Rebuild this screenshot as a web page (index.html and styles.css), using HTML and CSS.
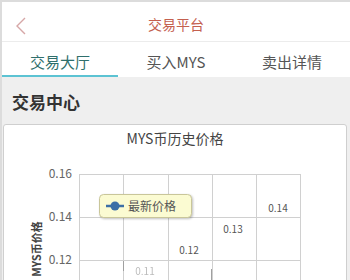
FILE: index.html
```html
<!DOCTYPE html>
<html lang="zh-CN">
<head>
    <meta charset="UTF-8">
    <meta name="viewport" content="width=device-width, initial-scale=1.0">
    <title>交易平台</title>
    <link rel="stylesheet" href="styles.css">
</head>
<body>
    <!-- Barra superiore -->
    <header class="topbar">
        <span class="back">
            <svg width="12" height="18" viewBox="0 0 12 18"><path d="M10 1 L2 9 L10 17" fill="none" stroke="#d6a7a7" stroke-width="1.4"/></svg>
        </span>
        <span class="title">交易平台</span>
    </header>

    <!-- Tab -->
    <nav class="tabs">
        <div class="tab active">交易大厅</div>
        <div class="tab">买入MYS</div>
        <div class="tab">卖出详情</div>
    </nav>

    <h2 class="section">交易中心</h2>

    <!-- Grafico prezzi -->
    <div class="card">
        <div class="card-title">MYS币历史价格</div>
        <svg class="chart" width="342" height="140" viewBox="4 150 342 140">
            <g stroke="#d0d0d0" stroke-width="1">
                <line x1="79" y1="173.5" x2="301" y2="173.5"/>
                <line x1="79" y1="216.5" x2="301" y2="216.5"/>
                <line x1="79" y1="259.5" x2="301" y2="259.5"/>
                <line x1="79.5" y1="173" x2="79.5" y2="290"/>
                <line x1="123.5" y1="173" x2="123.5" y2="290"/>
                <line x1="168.5" y1="173" x2="168.5" y2="290"/>
                <line x1="212.5" y1="173" x2="212.5" y2="290"/>
                <line x1="256.5" y1="173" x2="256.5" y2="290"/>
                <line x1="300.5" y1="173" x2="300.5" y2="290"/>
            </g>
            <g stroke="#a0a0a0" stroke-width="1">
                <line x1="123.5" y1="260" x2="123.5" y2="270"/>
                <line x1="211.5" y1="268" x2="211.5" y2="280"/>
            </g>
            <g class="ylabels">
                <text x="72" y="176.5">0.16</text>
                <text x="72" y="219.5">0.14</text>
                <text x="72" y="262.5">0.12</text>
            </g>
            <text class="ytitle" transform="translate(41 248) rotate(-90)">MYS币价格</text>
            <g class="vlabels">
                <text x="278" y="211">0.14</text>
                <text x="233" y="232">0.13</text>
                <text x="189" y="253">0.12</text>
                <text x="145" y="274" class="fade">0.11</text>
            </g>
            <!-- Legenda -->
            <rect x="99.5" y="193.5" width="92" height="23" rx="4" fill="#fbfbd2" stroke="#c9c69a" class="legend-box"/>
            <line x1="106" y1="205" x2="124" y2="205" stroke="#3c6fa6" stroke-width="2.5"/>
            <circle cx="115" cy="205" r="4.5" fill="#3c6fa6"/>
            <text class="legend-text" x="128" y="209.5">最新价格</text>
        </svg>
    </div>
</body>
</html>
```

FILE: styles.css
```css
body {
    margin: 0;
    width: 348px;
    height: 278px;
    overflow: hidden;
    border-top: 2px solid #dcdcdc;
    border-left: 2px solid #dcdcdc;
    background: #efefef;
    font-family: "Noto Sans CJK SC", "Noto Sans", sans-serif;
}
.topbar {
    position: relative;
    height: 40px;
    box-sizing: border-box;
    padding-top: 4px;
    display: flex;
    align-items: center;
    justify-content: center;
    background: #fff;
    border-bottom: 1px solid #ececec;
}
.back {
    position: absolute;
    left: 13px;
    top: 14px;
}
.title {
    font-size: 14px;
    color: #c4604f;
}
.tabs {
    display: flex;
    height: 35px;
    background: #fff;
}
.tab {
    flex: 1;
    box-sizing: border-box;
    padding-top: 4px;
    text-align: center;
    font-size: 15px;
    line-height: 31px;
    color: #555;
    border-bottom: 2px solid transparent;
}
.tab.active {
    color: #2f6f6c;
    border-bottom-color: #5cc3d3;
}
.section {
    margin: 0 0 11px;
    padding: 14px 0 0 10px;
    font-size: 17px;
    line-height: 22px;
    font-weight: bold;
    color: #333;
}
.card {
    margin: 0 3px 0 1px;
    background: #fff;
    border: 1px solid #cfcfcf;
    border-radius: 3px;
}
.card-title {
    padding-top: 2px;
    text-align: center;
    font-size: 14px;
    line-height: 22px;
    color: #444;
}
.chart {
    display: block;
    margin-top: 2px;
}
.ylabels text {
    font-size: 12px;
    fill: #666;
    text-anchor: end;
}
.ytitle {
    font-size: 11px;
    font-weight: bold;
    fill: #444;
    text-anchor: middle;
}
.vlabels text {
    font-size: 10px;
    fill: #555;
    text-anchor: middle;
}
.vlabels .fade {
    opacity: 0.4;
}
.legend-box {
    filter: drop-shadow(1px 1px 1px rgba(0, 0, 0, 0.25));
}
.legend-text {
    font-size: 12px;
    fill: #555;
}
```
